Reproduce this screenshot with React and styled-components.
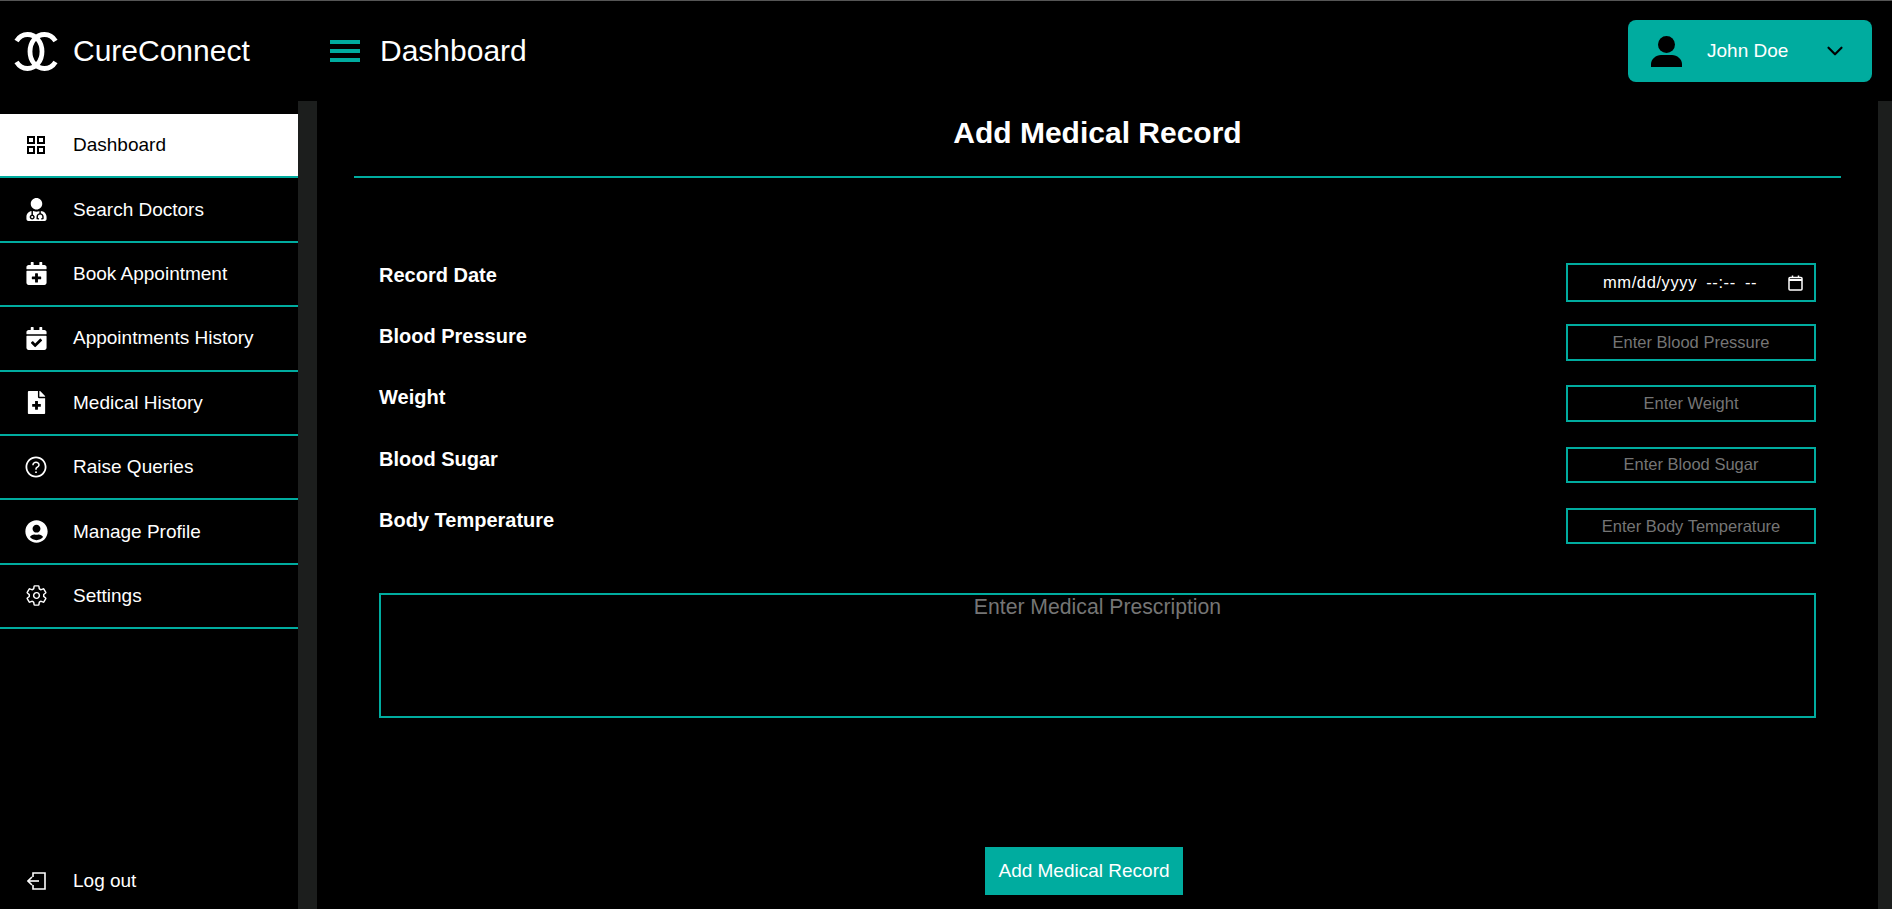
import React from 'react';
import styled, { createGlobalStyle } from 'styled-components';
import {
    FaUserMd,
    FaCalendarPlus,
    FaCalendarCheck,
    FaFileMedical,
    FaUserCircle
} from 'react-icons/fa';
import { AiOutlineQuestionCircle } from 'react-icons/ai';
import { IoSettingsOutline } from 'react-icons/io5';
import { LuChevronDown } from 'react-icons/lu';

const TEAL = '#00ac9f';

const GlobalStyle = createGlobalStyle`
    html, body {
        margin: 0;
        height: 100%;
        overflow: hidden;
        background-color: #000;
    }
    body {
        font-family: "Liberation Sans", Arial, sans-serif;
        color: #fff;
    }
`;

const Page = styled.div`
    display: flex;
    flex-direction: column;
    height: 909px;
    overflow: hidden;
    background-color: #000;
`;

const Header = styled.header`
    display: flex;
    align-items: center;
    box-sizing: border-box;
    flex: none;
    height: 101px;
    border-top: 1px solid #555;
    padding: 0 20px 0 14px;
`;

const Brand = styled.div`
    display: flex;
    align-items: center;
    width: 316px;
    gap: 15px;
    font-size: 30px;
`;

const PageTitle = styled.div`
    display: flex;
    align-items: center;
    gap: 20px;
    font-size: 30px;
    flex: 1;
`;

const MenuBars = styled.div`
    display: flex;
    flex-direction: column;
    gap: 4.5px;
    width: 30px;

    span {
        display: block;
        height: 4.5px;
        background-color: ${TEAL};
    }
`;

const UserButton = styled.button`
    display: flex;
    align-items: center;
    box-sizing: border-box;
    width: 244px;
    height: 62px;
    padding: 0 24px 0 23px;
    border: 0;
    border-radius: 8px;
    background-color: ${TEAL};
    color: #fff;
    font-family: inherit;
    font-size: 19px;

    span {
        flex: 1;
        margin-left: 25px;
        text-align: left;
    }
`;

const Body = styled.div`
    display: flex;
    flex: 1;
    min-height: 0;
`;

const Sidebar = styled.nav`
    display: flex;
    flex-direction: column;
    flex: none;
    width: 298px;
    padding-top: 13px;
`;

const NavItem = styled.a`
    display: flex;
    align-items: center;
    flex: none;
    box-sizing: border-box;
    height: 64.4px;
    padding-left: 24px;
    padding-top: ${props => props.$bottom ? '10px' : '0'};
    border-bottom: 2px solid ${props => props.$plain ? 'transparent' : TEAL};
    margin-top: ${props => props.$bottom ? 'auto' : '0'};
    background-color: ${props => props.$active ? '#fff' : 'transparent'};
    color: ${props => props.$active ? '#000' : '#fff'};
    font-size: 19px;
`;

const NavIcon = styled.div`
    display: flex;
    align-items: center;
    justify-content: center;
    flex: none;
    width: 24px;
    margin-right: 25px;
    font-size: 23px;
`;

const Track = styled.div`
    flex: none;
    width: ${props => props.$width}px;
    background-color: #1c1e1d;
`;

const Main = styled.main`
    flex: 1;
    min-width: 0;
    padding: 0 37px;
`;

const Title = styled.h1`
    box-sizing: border-box;
    height: 77px;
    margin: 0;
    padding-top: 14px;
    border-bottom: 2px solid ${TEAL};
    font-size: 30px;
    line-height: 36px;
    font-weight: 700;
    text-align: center;
`;

const Form = styled.form`
    display: flex;
    flex-direction: column;
    padding: 85px 25px 0;
`;

const Field = styled.div`
    display: flex;
    align-items: flex-start;
    justify-content: space-between;
    height: 61.2px;
`;

const Label = styled.label`
    font-size: 20px;
    font-weight: 700;
    line-height: 24px;
`;

const Input = styled.input`
    box-sizing: border-box;
    width: 250px;
    height: 36.5px;
    padding: 0 8px;
    border: 2px solid ${TEAL};
    border-radius: 0;
    outline: none;
    background-color: #000;
    color: #fff;
    font-family: inherit;
    font-size: 16.5px;
    text-align: center;

    &::placeholder {
        color: #757575;
        opacity: 1;
    }
`;

const DateBox = styled.div`
    display: flex;
    align-items: center;
    justify-content: space-between;
    box-sizing: border-box;
    width: 250px;
    height: 39px;
    padding: 0 11px 0 35px;
    border: 2px solid ${TEAL};
    font-size: 16.5px;
    letter-spacing: 0.6px;
    word-spacing: 4px;
`;

const Prescription = styled.textarea`
    display: block;
    box-sizing: border-box;
    width: 100%;
    height: 125px;
    margin-top: 24px;
    padding: 0 2px;
    border: 2px solid ${TEAL};
    border-radius: 0;
    outline: none;
    resize: none;
    background-color: #000;
    color: #fff;
    font-family: inherit;
    font-size: 21.2px;
    text-align: center;

    &::placeholder {
        color: #757575;
        opacity: 1;
    }
`;

const SubmitButton = styled.button`
    align-self: flex-start;
    width: 198px;
    height: 48px;
    margin: 129px 0 0 606px;
    border: 0;
    background-color: ${TEAL};
    color: #fff;
    font-family: inherit;
    font-size: 19px;
`;

const Logo = () => (
    <svg width="44" height="39" viewBox="0 0 44 39" fill="none" stroke="#fff" strokeWidth="4.8">
        <path d="M2.5 9 C5 5 9 2.5 13.5 2.5 C22 2.5 28 10 28 19.5 C28 29 22 36.5 13.5 36.5 C9 36.5 5 34 2.5 30" />
        <path d="M41.5 9 C39 5 35 2.5 30.5 2.5 C22 2.5 16 10 16 19.5 C16 29 22 36.5 30.5 36.5 C35 36.5 39 34 41.5 30" />
    </svg>
);

const GridIcon = () => (
    <svg width="18" height="18" viewBox="0 0 18 18" fill="none" stroke="currentColor" strokeWidth="2">
        <rect x="1" y="1" width="6" height="6" />
        <rect x="11" y="1" width="6" height="6" />
        <rect x="1" y="11" width="6" height="6" />
        <rect x="11" y="11" width="6" height="6" />
    </svg>
);

const LogoutIcon = () => (
    <svg width="19" height="18" viewBox="0 0 19 18" fill="none" stroke="currentColor" strokeWidth="1.6">
        <path d="M6 5 V1 H18 V17 H6 V13" />
        <path d="M1 9 H12" />
        <path d="M5 5 L1 9 L5 13" />
    </svg>
);

const UserIcon = () => (
    <svg width="31" height="31" viewBox="0 0 31 31" fill="#000">
        <circle cx="15.5" cy="8.5" r="8.5" />
        <path d="M0 31 V28 C0 23 5 19 10 19 H21 C26 19 31 23 31 28 V31 Z" />
    </svg>
);

const CalendarIcon = () => (
    <svg width="15" height="16" viewBox="0 0 15 16" fill="none" stroke="#fff" strokeWidth="1.5">
        <rect x="1" y="2.5" width="13" height="12.5" rx="1" />
        <path d="M1 5 H14" strokeWidth="2" />
        <path d="M4.5 0.5 V2.5 M10.5 0.5 V2.5" />
    </svg>
);

const navItems = [
    { label: 'Dashboard', icon: <GridIcon />, active: true },
    { label: 'Search Doctors', icon: <FaUserMd /> },
    { label: 'Book Appointment', icon: <FaCalendarPlus /> },
    { label: 'Appointments History', icon: <FaCalendarCheck /> },
    { label: 'Medical History', icon: <FaFileMedical /> },
    { label: 'Raise Queries', icon: <AiOutlineQuestionCircle size={26} /> },
    { label: 'Manage Profile', icon: <FaUserCircle /> },
    { label: 'Settings', icon: <IoSettingsOutline /> }
];

const fields = ['Blood Pressure', 'Weight', 'Blood Sugar', 'Body Temperature'];

const App = () => {
    return (
        <Page>
            <GlobalStyle />
            <Header>
                <Brand>
                    <Logo />
                    CureConnect
                </Brand>
                <PageTitle>
                    <MenuBars>
                        <span />
                        <span />
                        <span />
                    </MenuBars>
                    Dashboard
                </PageTitle>
                <UserButton type="button">
                    <UserIcon />
                    <span>John Doe</span>
                    <LuChevronDown size={26} color="#000" />
                </UserButton>
            </Header>
            <Body>
                <Sidebar>
                    {navItems.map(item => (
                        <NavItem key={item.label} $active={item.active}>
                            <NavIcon>{item.icon}</NavIcon>
                            {item.label}
                        </NavItem>
                    ))}
                    <NavItem $plain $bottom>
                        <NavIcon><LogoutIcon /></NavIcon>
                        Log out
                    </NavItem>
                </Sidebar>
                <Track $width={19} />
                <Main>
                    <Title>Add Medical Record</Title>
                    <Form>
                        <Field>
                            <Label>Record Date</Label>
                            <DateBox>
                                mm/dd/yyyy --:-- --
                                <CalendarIcon />
                            </DateBox>
                        </Field>
                        {fields.map(name => (
                            <Field key={name}>
                                <Label>{name}</Label>
                                <Input type="text" placeholder={`Enter ${name}`} />
                            </Field>
                        ))}
                        <Prescription placeholder="Enter Medical Prescription" />
                        <SubmitButton type="button">Add Medical Record</SubmitButton>
                    </Form>
                </Main>
                <Track $width={14} />
            </Body>
        </Page>
    );
};

export default App;
